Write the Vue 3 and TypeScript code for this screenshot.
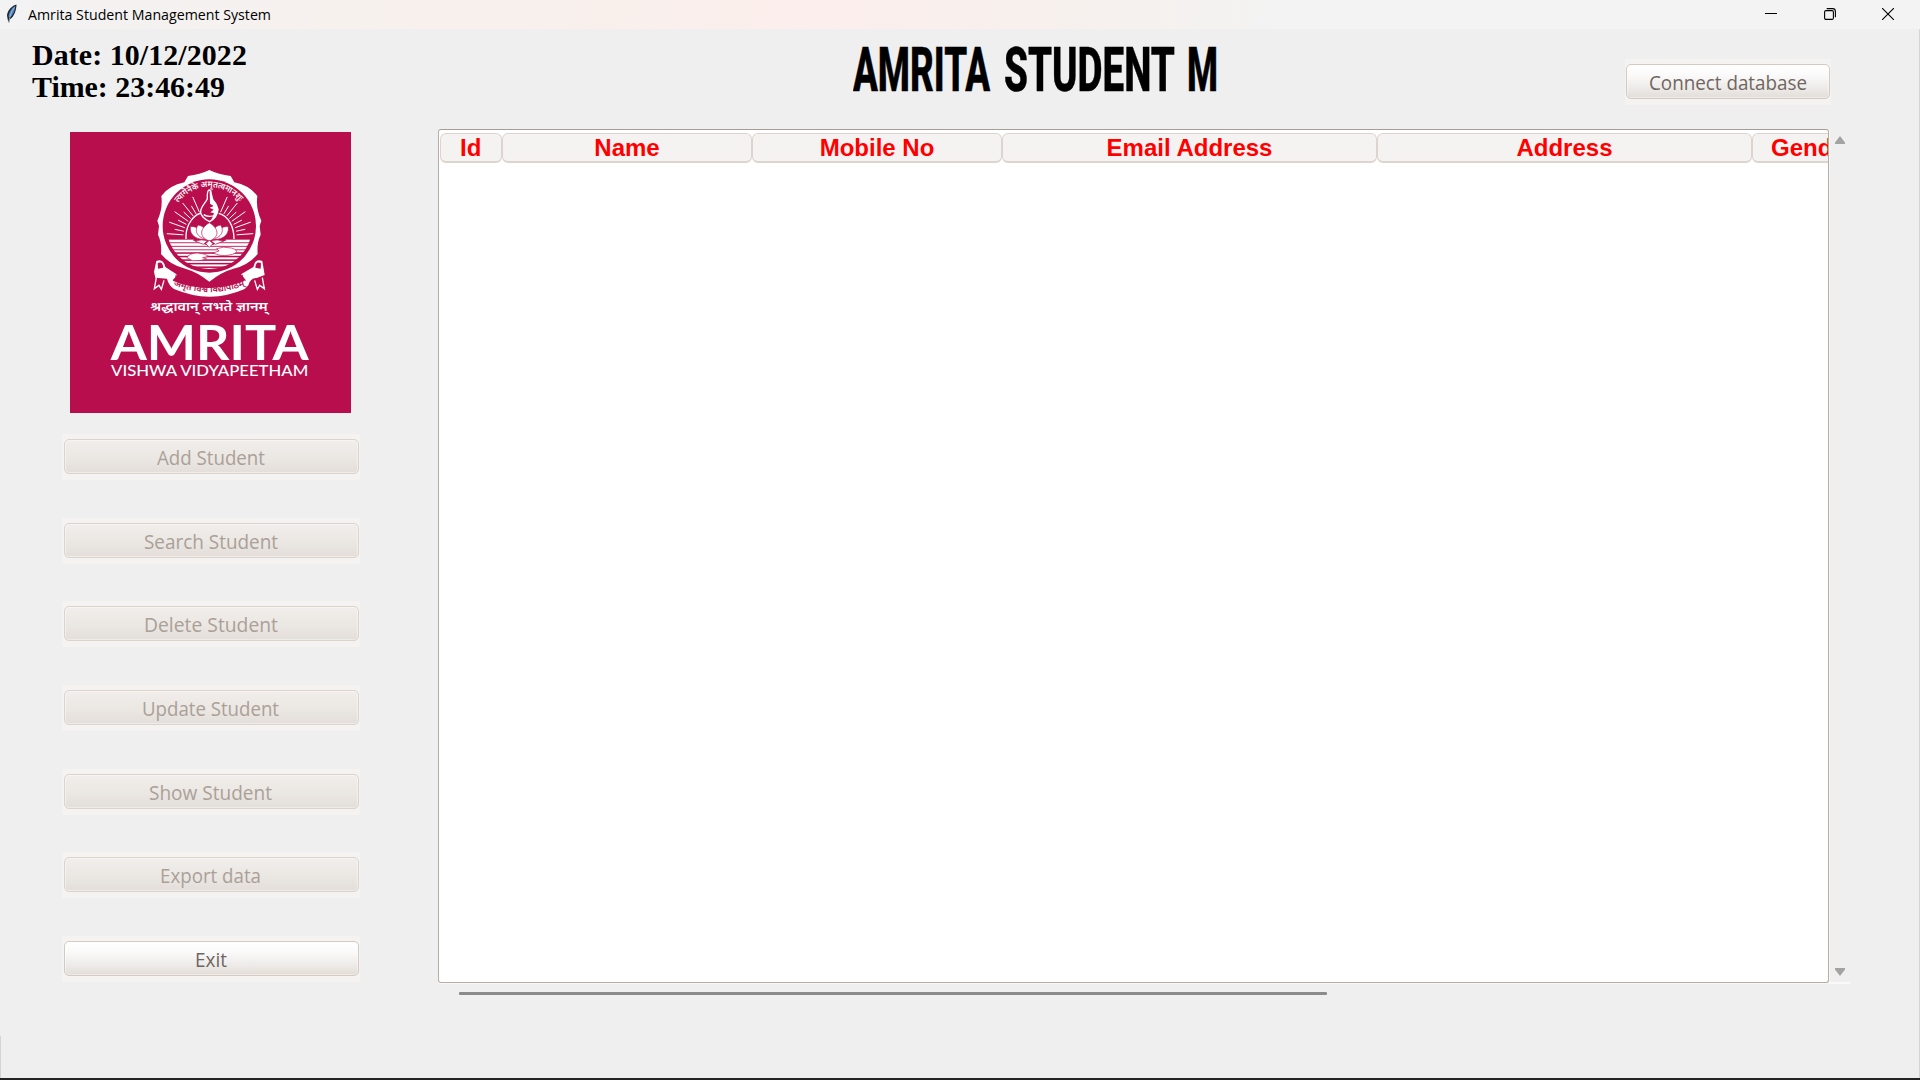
<script setup lang="ts">
interface Action {
  label: string
  width: number
  enabled: boolean
}

const actions: Action[] = [
  { label: 'Add Student', width: 108, enabled: false },
  { label: 'Search Student', width: 134, enabled: false },
  { label: 'Delete Student', width: 134, enabled: false },
  { label: 'Update Student', width: 137, enabled: false },
  { label: 'Show Student', width: 123, enabled: false },
  { label: 'Export data', width: 101, enabled: false },
  { label: 'Exit', width: 32, enabled: true },
]

const columns: { label: string; width: number }[] = [
  { label: 'Id', width: 62.5 },
  { label: 'Name', width: 250 },
  { label: 'Mobile No', width: 250 },
  { label: 'Email Address', width: 375 },
  { label: 'Address', width: 375 },
  { label: 'Gender', width: 122 },
]

// Sun rays fan out above the horizon of the emblem.
const rays = Array.from({ length: 23 }, (_, i) => {
  const angle = (Math.PI * (4 + i * 7.82)) / 180
  const outer = i % 2 === 0 ? 130 : 108
  return {
    x1: 450 + 80 * Math.cos(angle),
    y1: 334 - 80 * Math.sin(angle),
    x2: 450 + outer * Math.cos(angle),
    y2: 334 - outer * Math.sin(angle),
  }
}).filter((_, i) => i < 9 || i > 13)

const waves = Array.from({ length: 9 }, (_, i) => ({ y: 343 + i * 10.6, h: i < 3 ? 8 : 6 }))
</script>

<template>
  <div class="window">
    <header class="titlebar">
      <svg class="feather" width="14" height="22" viewBox="0 0 14 22">
        <path d="M11.5 1.5C7.500 2.500 2.500 7 2 12.500L2.800 17L4 20L4.800 16.500C9 14 11.500 7 11.500 1.500Z" fill="#20262e" />
        <path d="M10.300 3C7 4.500 4 8.500 3.500 13.500L5 14.500C8 12 10 7.500 10.300 3Z" fill="#4e86c6" />
        <path d="M9.500 4.500C6.500 8 5 12 3.900 19" fill="none" stroke="#b9cde2" stroke-width=".7" />
      </svg>
      <svg class="caption" width="246" height="28"><text x="0" y="19.500" textLength="243" lengthAdjust="spacingAndGlyphs">Amrita Student Management System</text></svg>
      <div class="controls">
        <svg width="12" height="12" viewBox="0 0 12 12"><path d="M0 5.500H12" stroke="#000" /></svg>
        <svg width="12" height="12" viewBox="0 0 12 12" fill="none" stroke="#000" stroke-width="1.100"><rect x=".6" y="2.600" width="8.800" height="8.800" rx="1.400" /><path d="M2.700 .6H8.600Q11.400 .6 11.400 3.400V9.300" /></svg>
        <svg width="12" height="12" viewBox="0 0 12 12"><path d="M0 0L12 12M12 0L0 12" stroke="#000" stroke-width="1.100" /></svg>
      </div>
    </header>

    <div class="client">
      <div class="top">
        <div class="clock">
          <div class="date">Date: 10/12/2022</div>
          <div>Time: 23:46:49</div>
        </div>
        <svg class="heading" width="370" height="84">
          <text x="0" y="62" textLength="137" lengthAdjust="spacingAndGlyphs">AMRITA</text>
          <text x="151" y="62" textLength="171" lengthAdjust="spacingAndGlyphs">STUDENT</text>
          <text x="334" y="62" textLength="31" lengthAdjust="spacingAndGlyphs">M</text>
        </svg>
        <div class="pad connect">
          <button class="btn">
            <svg width="160" height="33"><text x="1" y="25" textLength="158" lengthAdjust="spacingAndGlyphs">Connect database</text></svg>
          </button>
        </div>
      </div>

      <div class="main">
        <aside class="side">
          <svg class="logo" width="281" height="281" viewBox="30 20 843 843">
            <defs>
              <clipPath id="disc"><circle cx="448" cy="302" r="129" /></clipPath>
              <path id="arcTop" d="M355 232A116 116 0 0 1 541 232" />
              <path id="arcRibbon" d="M340 479Q450 523 564 477" />
            </defs>
            <rect x="30" y="20" width="843" height="843" fill="#b90e4d" />
            <path
              d="M448 134Q476 148 512 152L523 171Q568 180 592 212Q587 250 604 286L599 302L602 328Q590 352 593 386Q565 420 520 430Q484 440 448 469Q412 440 376 430Q331 420 303 386Q306 352 294 328L297 302L292 286Q309 250 304 212Q328 180 373 171L384 152Q420 148 448 134Z"
              fill="#fff"
            />
            <circle cx="448" cy="302" r="140" fill="#b90e4d" />
            <g stroke="#fff" stroke-width="3">
              <line v-for="(r, i) in rays" :key="i" :x1="r.x1" :y1="r.y1" :x2="r.x2" :y2="r.y2" />
            </g>
            <path d="M378 341V330C380 292 405 266 425 263M476 264C505 272 522 302 522 341" fill="none" stroke="#fff" stroke-width="4" />
            <g clip-path="url(#disc)" fill="#fff">
              <rect v-for="(w, i) in waves" :key="i" x="310" :y="w.y" width="276" :height="w.h" />
            </g>
            <path d="M398 345L448 362L500 345L486 334H412Z" fill="#b90e4d" />
            <g fill="#fff" stroke="#b90e4d" stroke-width="2">
              <path d="M446 341C414 347 387 332 391 304C405 301 418 311 423 321Z" />
              <path d="M450 341C482 347 509 332 505 304C491 301 478 311 473 321Z" />
              <path d="M443 343C409 337 403 315 414 299C433 302 442 318 446 333Z" />
              <path d="M453 343C487 337 493 315 482 299C463 302 454 318 450 333Z" />
              <path d="M448 347C413 334 422 307 448 292C474 307 483 334 448 347Z" />
              <path d="M405 347Q425 341 443 346L430 357ZM491 347Q471 341 453 346L466 357Z" />
              <path d="M448 345L459 355L448 366L437 355Z" />
              <path d="M381 397Q386 384 412 383Q438 385 446 393L428 397L440 401Q420 408 397 406Z" />
              <path d="M458 383L477 377L470 370Q490 362 514 368Q535 374 528 382Q510 393 480 390Z" />
            </g>
            <path d="M447 194Q441 196 442 220C436 235 420 244 422 263Q427 279 449 289Q472 276 474 252Q471 237 459 225Q454 213 452 195Z" fill="#b90e4d" stroke="#fff" stroke-width="4" />
            <path d="M449 197Q459 205 457 220Q475 238 474 258Q469 278 450 289Q458 278 462 264L451 261L461 253L449 247L461 242L450 235Z" fill="#fff" />
            <path d="M431 268Q447 278 467 269" fill="none" stroke="#fff" stroke-width="4" />
            <text class="deva tiny" fill="#fff"><textPath href="#arcTop" textLength="212" lengthAdjust="spacingAndGlyphs">त्यागेनैके अमृतत्वमानशुः</textPath></text>

            <path d="M289 407Q310 398 316 425L352 448L338 466Q445 510 557 465L543 447L580 425Q585 398 607 407L614 449L590 458Q571 457 565 480L554 491Q450 537 342 491Q326 480 321 460L286 457L282 440Z" fill="#fff" />
            <path d="M293 414Q307 406 310 427L294 430ZM603 414Q588 406 586 427L602 430Z" fill="#b90e4d" />
            <path d="M289 457L283 490L297 480L304 492L312 465M607 457L613 490L599 480L592 492L584 465" fill="none" stroke="#fff" stroke-width="4" />
            <path d="M339 465Q350 459 349 447M557 465Q546 458 546 448" fill="none" stroke="#b90e4d" stroke-width="3" />
            <text class="deva ribbon" fill="#b90e4d"><textPath href="#arcRibbon" textLength="220" lengthAdjust="spacingAndGlyphs">अमृत विश्व विद्यापीठम्</textPath></text>
            <text class="deva motto" x="271" y="556" textLength="352" lengthAdjust="spacingAndGlyphs" fill="#fff">श्रद्धावान् लभते ज्ञानम्</text>
            <text class="brand" x="152" y="703" textLength="594" lengthAdjust="spacingAndGlyphs" fill="#fff">AMRITA</text>
            <text class="sub" x="153" y="751" textLength="592" lengthAdjust="spacingAndGlyphs" fill="#fff">VISHWA VIDYAPEETHAM</text>
          </svg>
          <nav class="actions">
            <div v-for="a in actions" :key="a.label" class="pad">
              <button class="btn" :disabled="!a.enabled">
                <svg :width="a.width + 2" height="33"><text x="0" y="25" :textLength="a.width" lengthAdjust="spacingAndGlyphs">{{ a.label }}</text></svg>
              </button>
            </div>
          </nav>
        </aside>

        <section class="grid-area">
          <div class="table">
            <div class="thead">
              <div v-for="c in columns" :key="c.label" class="th" :style="{ width: c.width + 'px' }">{{ c.label }}</div>
            </div>
          </div>
          <div class="hbar"></div>
        </section>
        <div class="vbar">
          <svg width="10" height="8"><path d="M5 0L10 6.500V8H0V6.500Z" fill="#a3a3a3" /></svg>
          <svg width="10" height="8"><path d="M5 8L10 1.500V0H0V1.500Z" fill="#a3a3a3" /></svg>
        </div>
      </div>
      <div class="edge"></div>
    </div>
    <div class="taskline"></div>
  </div>
</template>

<style>
body {
  margin: 0;
  overflow: hidden;
}
</style>

<style scoped>
.window {
  width: 1920px;
  height: 1080px;
  display: flex;
  flex-direction: column;
  background: #efefef;
  font-family: 'Open Sans', 'Noto Sans', sans-serif;
  overflow: hidden;
}
svg {
  display: block;
  flex: none;
}
.titlebar {
  height: 29px;
  flex: none;
  display: flex;
  background: linear-gradient(90deg, #f3f3f3 0, #f3f2f1 100px, #f7f1ee 330px, #f8f0ec 560px, #fceeec 820px, #f6f1ee 1100px, #f3f3f3 1280px);
}
.feather {
  margin: 3px 0 0 5px;
}
.caption {
  margin: 0 0 0 9px;
  font-size: 14.500px;
}
.controls {
  display: flex;
  gap: 46.500px;
  margin: 8px 26px 0 auto;
}
.client {
  height: 1049px;
  flex: none;
  box-sizing: border-box;
  border-right: 1px solid #d4d4d4;
}
.top {
  height: 100px;
  display: grid;
  grid-template-columns: 820px 370px 206px;
  padding-left: 33px;
}
.clock {
  font: bold 29.900px/32px 'Liberation Serif', serif;
  padding-top: 10px;
  margin-left: -1px;
  white-space: nowrap;
  color: #000;
}
.date {
  letter-spacing: 0.1px;
}
.heading {
  font: 800 61.500px 'Roboto', 'Liberation Sans', sans-serif;
  stroke: #000;
  stroke-width: 0.5px;
}
.pad {
  height: 46px;
  box-sizing: border-box;
  padding: 5px 1px 6px;
  background: #f5f3f1;
}
.actions .pad {
  padding-left: 2px;
}
.connect {
  margin: 30px 0 0 402px;
  width: 206px;
}
.btn {
  width: 100%;
  height: 35px;
  box-sizing: border-box;
  padding: 0;
  display: flex;
  align-items: center;
  justify-content: center;
  border: 1px solid #d3cac2;
  border-radius: 5px;
  background: linear-gradient(#fff, #fbfafa 30%, #efedeb 65%, #e2ddd8);
  box-shadow: inset 0 0 0 1px rgba(255, 255, 255, 0.4);
  color: #70665f;
}
.btn:disabled {
  border-color: #dcd3cb;
  background: linear-gradient(#f1eeeb, #ebe7e3 55%, #e3ded9);
  color: #aaa098;
}
.btn svg {
  font: 19.500px 'Open Sans', 'Noto Sans', sans-serif;
  fill: currentColor;
}
.main {
  display: flex;
  height: 878px;
}
.side {
  width: 438px;
  flex: none;
}
.logo {
  margin: 3px 0 21px 70px;
}
.actions {
  margin-left: 62px;
  width: 298px;
  height: 548px;
  display: flex;
  flex-direction: column;
  justify-content: space-between;
}
.grid-area {
  width: 1391px;
  flex: none;
}
.table {
  height: 854px;
  box-sizing: border-box;
  border: 1px solid #b8ada6;
  border-top-color: #a79d97;
  border-radius: 3px;
  background: #fff;
  box-shadow: 0 1px 0 #f8f7f6, 1px 0 0 #f8f7f6;
  overflow: hidden;
}
.thead {
  display: flex;
  margin: 3px 0 0 0.5px;
  overflow: hidden;
}
.th {
  flex: none;
  height: 30px;
  box-sizing: border-box;
  border: 1.500px solid #ddd5cd;
  border-bottom-width: 2px;
  border-radius: 6px;
  background: #f5f3f2;
  color: #f00;
  font: bold 24px/28px 'Liberation Sans', Arial, sans-serif;
  text-align: center;
  white-space: nowrap;
}
.hbar {
  width: 868px;
  height: 3px;
  margin: 9px 0 0 21px;
  background: #8b8b8b;
  border-radius: 1px;
}
.vbar {
  width: 21px;
  height: 855px;
  box-sizing: border-box;
  padding: 7px 5px 6px 6px;
  border-bottom: 2px solid #f9f9f9;
  display: flex;
  flex-direction: column;
  justify-content: space-between;
}
.edge {
  width: 1px;
  height: 42px;
  margin-top: 29px;
  background: #d4d4d4;
}
.taskline {
  height: 2px;
  background: #222426;
}
.deva {
  font-family: 'Noto Sans Devanagari', 'Noto Sans', 'FreeSans', sans-serif;
}
.tiny {
  font-size: 26px;
  font-weight: 600;
}
.ribbon {
  font-size: 25px;
  font-weight: 600;
}
.motto {
  font-size: 38px;
  font-weight: 600;
}
.brand {
  font: bold 145px 'Lato', sans-serif;
}
.sub {
  font: 500 47px 'Lato', sans-serif;
}
</style>
